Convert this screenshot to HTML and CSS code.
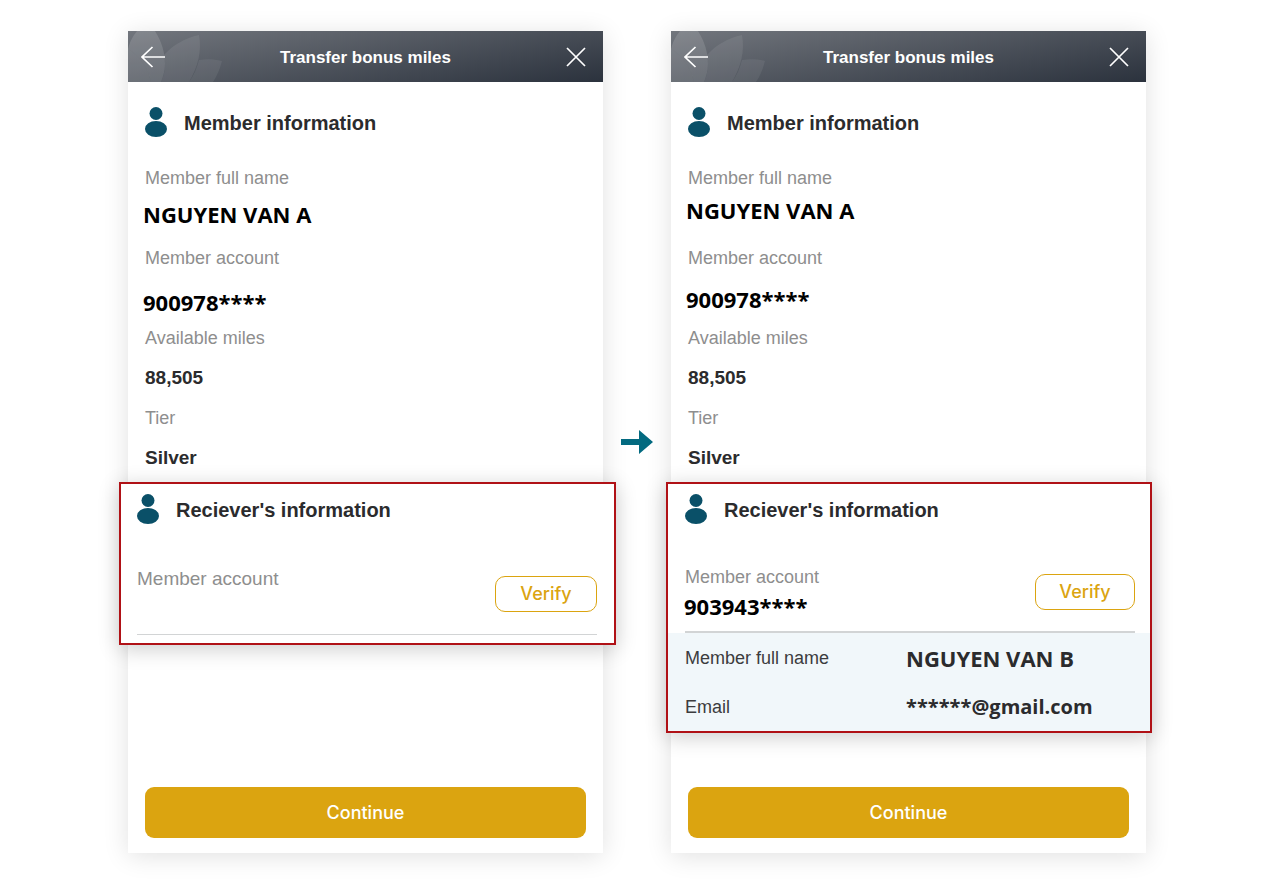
FILE: index.html
```html
<!DOCTYPE html>
<html lang="en">
<head>
    <meta charset="UTF-8">
    <meta name="viewport" content="width=device-width, initial-scale=1.0">
    <title>Transfer bonus miles</title>
    <link rel="stylesheet" href="styles.css">
</head>
<body>

    <svg class="symbols" aria-hidden="true">
        <symbol id="person" viewBox="0 0 22 30">
            <circle cx="11" cy="6.5" r="6.5"/>
            <ellipse cx="11" cy="22" rx="11" ry="8"/>
        </symbol>
        <symbol id="lotus" viewBox="0 0 96 51">
            <path d="M0 18C2 10 5 5 9 0H27C34 11 37 22 37 33C37 39 35 46 33 51H23C20 37 12 25 0 18Z"/>
            <path d="M0 18C12 25 20 37 23 51H0Z"/>
            <path d="M36 24C45 14 57 7 71 4C74 20 70 36 61 51H33C37 42 38 33 36 24Z" opacity="0.6"/>
            <path d="M71 29C78 28 86 28 94 30C92 38 89 45 85 51H61C66 44 69 37 71 29Z" opacity="0.5"/>
        </symbol>
        <symbol id="back" viewBox="0 0 24 22">
            <path d="M11.500 1L1 11L11.500 21M1 11H24"/>
        </symbol>
        <symbol id="close" viewBox="0 0 20 20">
            <path d="M1 1L19 19M19 1L1 19"/>
        </symbol>
    </svg>

    <main class="steps">
        <section class="card">
            <header class="card-header">
                <svg class="lotus"><use href="#lotus"/></svg>
                <button class="icon-button" type="button" aria-label="Back"><svg class="back"><use href="#back"/></svg></button>
                <h1>Transfer bonus miles</h1>
                <button class="icon-button" type="button" aria-label="Close"><svg class="close"><use href="#close"/></svg></button>
            </header>
            <div class="member">
                <h2><svg class="person"><use href="#person"/></svg><span>Member information</span></h2>
                <dl>
                    <dt>Member full name</dt>
                    <dd class="typed raised">NGUYEN VAN A</dd>
                    <dt>Member account</dt>
                    <dd class="typed lowered">900978****</dd>
                    <dt>Available miles</dt>
                    <dd>88,505</dd>
                    <dt>Tier</dt>
                    <dd>Silver</dd>
                </dl>
            </div>
            <form class="receiver wide">
                <h2><svg class="person"><use href="#person"/></svg><span>Reciever's information</span></h2>
                <div class="account">
                    <div class="field">
                        <label for="account1">Member account</label>
                        <input type="text" id="account1">
                    </div>
                    <button class="verify" type="button">Verify</button>
                </div>
            </form>
            <button class="continue" type="button">Continue</button>
        </section>

        <svg class="next" viewBox="0 0 32 24" aria-hidden="true">
            <path d="M0 9H18V0L32 12L18 24V15H0Z"/>
        </svg>

        <section class="card">
            <header class="card-header">
                <svg class="lotus"><use href="#lotus"/></svg>
                <button class="icon-button" type="button" aria-label="Back"><svg class="back"><use href="#back"/></svg></button>
                <h1>Transfer bonus miles</h1>
                <button class="icon-button" type="button" aria-label="Close"><svg class="close"><use href="#close"/></svg></button>
            </header>
            <div class="member">
                <h2><svg class="person"><use href="#person"/></svg><span>Member information</span></h2>
                <dl>
                    <dt>Member full name</dt>
                    <dd class="typed raised-more">NGUYEN VAN A</dd>
                    <dt>Member account</dt>
                    <dd class="typed">900978****</dd>
                    <dt>Available miles</dt>
                    <dd>88,505</dd>
                    <dt>Tier</dt>
                    <dd>Silver</dd>
                </dl>
            </div>
            <form class="receiver">
                <h2><svg class="person"><use href="#person"/></svg><span>Reciever's information</span></h2>
                <div class="account">
                    <div class="field">
                        <label for="account2">Member account</label>
                        <input type="text" id="account2" value="903943****">
                    </div>
                    <button class="verify" type="button">Verify</button>
                </div>
                <dl class="result">
                    <dt>Member full name</dt>
                    <dd class="result-name">NGUYEN VAN B</dd>
                    <dt>Email</dt>
                    <dd>******@gmail.com</dd>
                </dl>
            </form>
            <button class="continue" type="button">Continue</button>
        </section>
    </main>

</body>
</html>
```
FILE: styles.css
```css
* {
    box-sizing: border-box;
}
body {
    margin: 0;
    background-color: #fff;
    color: #2b2b2d;
    font-family: "Liberation Sans", Arial, sans-serif;
    font-size: 18px;
}
h1, h2, dl, dd {
    margin: 0;
}
button {
    padding: 0;
    cursor: pointer;
}
.symbols {
    position: absolute;
    width: 0;
    height: 0;
}
.steps {
    display: grid;
    grid-template-columns: 1fr 32px 1fr;
    gap: 18px;
    align-items: center;
    min-height: 100vh;
    padding: 31px 130px 35px 128px;
}
.card {
    display: flex;
    flex-direction: column;
    align-self: stretch;
    background-color: #fff;
    box-shadow: 0 3px 24px rgba(0, 0, 0, 0.12);
}
.card-header {
    position: relative;
    display: flex;
    justify-content: space-between;
    align-items: center;
    height: 51px;
    padding: 0 17px 0 13px;
    background: linear-gradient(170deg, #72767d, #2b323d);
    color: #fff;
}
.card-header h1 {
    padding-top: 2px;
    font-size: 17px;
    line-height: 20px;
}
.lotus {
    position: absolute;
    left: 0;
    top: 0;
    width: 96px;
    height: 51px;
    fill: rgba(255, 255, 255, 0.13);
}
.icon-button {
    position: relative;
    display: flex;
    border: none;
    background: none;
}
.back, .close {
    width: 24px;
    height: 22px;
    fill: none;
    stroke: #fff;
    stroke-width: 1.7;
}
.close {
    width: 20px;
    height: 20px;
}
.member {
    padding: 25px 17px 0;
}
h2 {
    display: flex;
    align-items: center;
    gap: 17px;
    font-size: 20px;
    line-height: 28px;
}
h2 span {
    padding-top: 2px;
}
.person {
    width: 22px;
    height: 30px;
    fill: #0a5068;
}
.member dl {
    margin-top: 31px;
}
.member dt, .field label {
    color: #8e8e8e;
    line-height: 20px;
}
.member dd {
    height: 24px;
    margin: 18px 0;
    font-size: 19px;
    font-weight: bold;
    line-height: 24px;
}
.member .typed {
    margin-top: 19px;
    margin-bottom: 17px;
    margin-left: -2px;
    color: #000;
    font-family: "Open Sans", sans-serif;
    font-size: 22px;
}
.member .raised {
    margin-top: 14px;
    margin-bottom: 22px;
}
.member .raised-more {
    margin-top: 10px;
    margin-bottom: 26px;
}
.member .lowered {
    margin-top: 22px;
    margin-bottom: 14px;
}
.receiver {
    position: relative;
    margin: -6px -6px 0 -5px;
    padding-top: 10px;
    border: 2px solid #b01116;
    background-color: #fff;
    box-shadow: 0 4px 20px rgba(0, 0, 0, 0.2);
}
.receiver h2 {
    padding: 0 17px;
}
.receiver.wide {
    margin-left: -9px;
    margin-right: -13px;
    padding-bottom: 8px;
}
.wide h2 {
    padding: 0 16px;
}
.account {
    display: flex;
    align-items: center;
    margin: 43px 15px 0 17px;
    padding-bottom: 10px;
    border-bottom: 2px solid #d2d4d5;
}
.wide .account {
    margin: 45px 17px 0 16px;
    padding-bottom: 11px;
    border-bottom-width: 1px;
}
.field {
    display: flex;
    flex: 1;
    flex-direction: column;
    min-width: 0;
}
.field input {
    width: 100%;
    height: 34px;
    margin-left: -1px;
    padding: 4px 0 0;
    border: none;
    outline: none;
    background: none;
    color: #000;
    font: bold 22px "Open Sans", sans-serif;
}
.wide label {
    font-size: 19px;
}
.verify {
    width: 100px;
    height: 36px;
    margin-bottom: 5px;
    border: 1px solid #dba410;
    border-radius: 10px;
    background-color: #fff;
    color: #dba410;
    font: 500 18px Inter, sans-serif;
}
.wide .verify {
    width: 102px;
}
.result {
    display: grid;
    grid-template-columns: 221px 1fr;
    align-items: center;
    padding: 0 17px;
    background-color: #f1f7fa;
    line-height: 48px;
}
.result dt {
    padding-top: 1px;
    color: #3c3c3e;
}
.result dd {
    color: #2b2b2d;
    font: bold 20px/48px "Open Sans", sans-serif;
}
.result .result-name {
    font-size: 22px;
}
.continue {
    height: 51px;
    margin: auto 17px 15px;
    border: none;
    border-radius: 9px;
    background-color: #dba410;
    color: #fff;
    font: 500 18px Inter, sans-serif;
}
.next {
    width: 32px;
    height: 24px;
    fill: #036a80;
}
```
